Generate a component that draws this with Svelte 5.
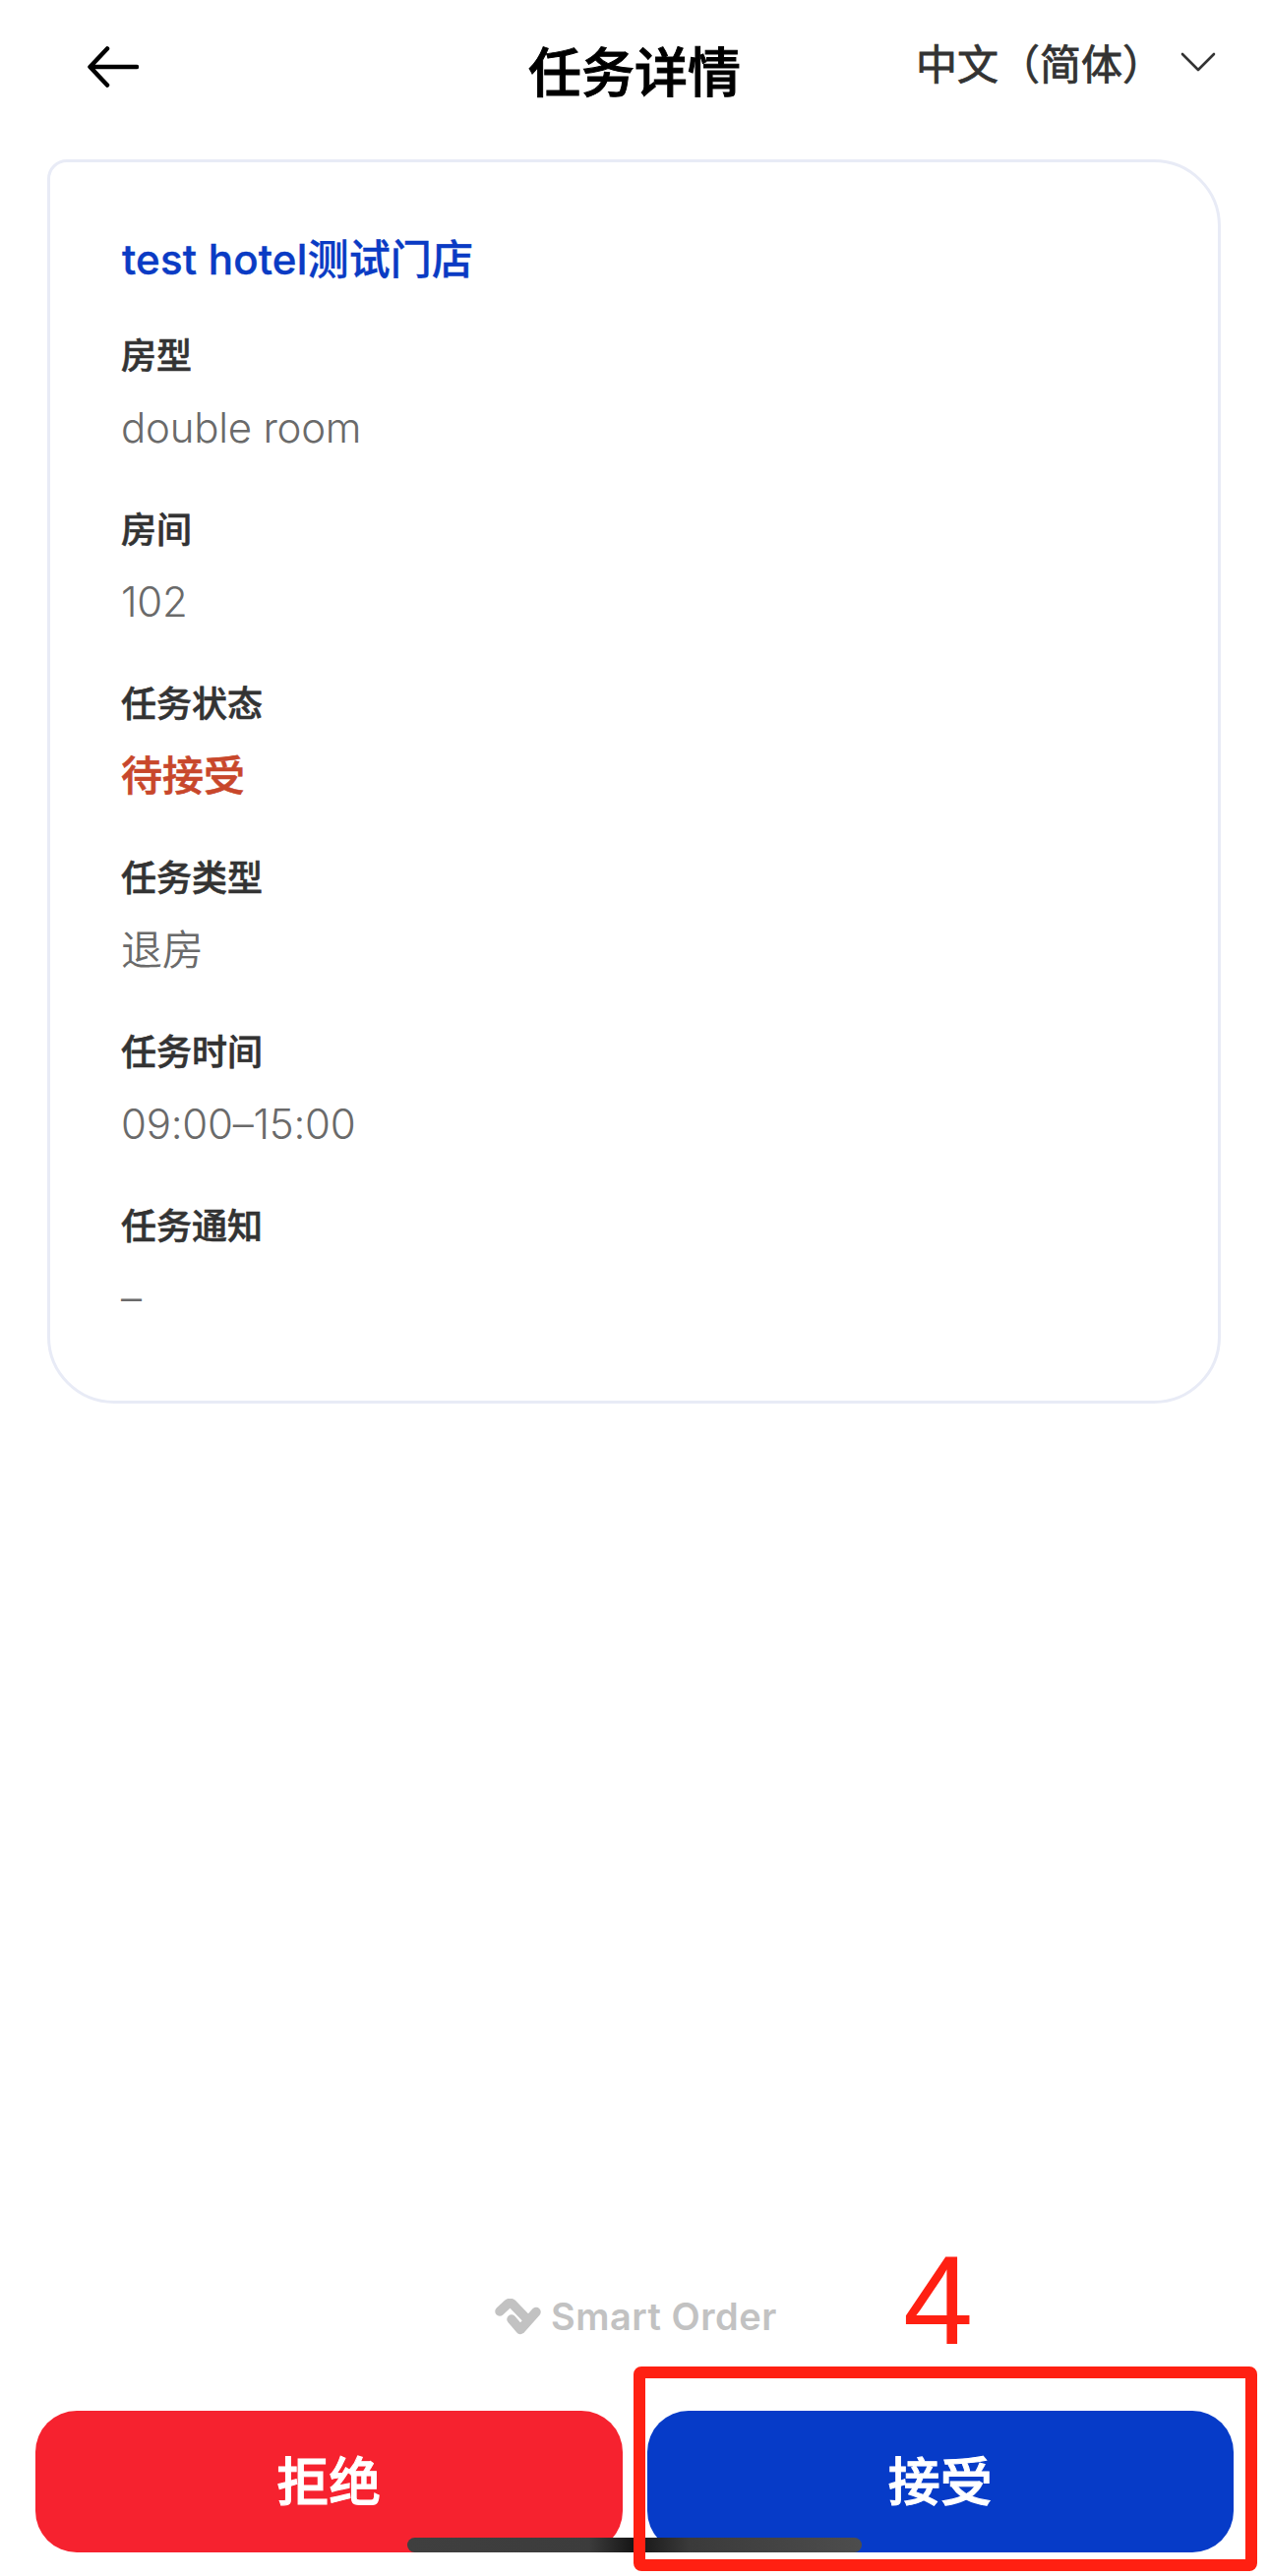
<script>
  const rows = [
    { label: '房型', value: 'double room' },
    { label: '房间', value: '102' },
    { label: '任务状态', value: '待接受', status: true },
    { label: '任务类型', value: '退房' },
    { label: '任务时间', value: '09:00–15:00' },
    { label: '任务通知', value: '–' }
  ];
</script>

<div class="page">
  <header class="top">
    <svg class="back" width="52" height="42" viewBox="0 0 52 42" fill="none" stroke="#000" stroke-width="4.5" stroke-linecap="round" stroke-linejoin="round">
      <path d="M50 21H3M20 2.500 2.500 21 20 39.500" />
    </svg>
    <h1>任务详情</h1>
    <div class="lang">
      <span>中文（简体）</span>
      <svg width="36" height="22" viewBox="0 0 36 22" fill="none" stroke="#333" stroke-width="2.6" stroke-linecap="round" stroke-linejoin="round">
        <path d="M2 3 18 19 34 3" />
      </svg>
    </div>
  </header>

  <section class="card">
    <h2>test hotel测试门店</h2>
    {#each rows as row}
      <div class="row">
        <div class="label">{row.label}</div>
        <div class="value" class:status={row.status}>{row.value}</div>
      </div>
    {/each}
  </section>

  <div class="spacer"></div>

  <div class="brand">
    <svg width="47" height="37" viewBox="0 0 47 37" fill="none" stroke="#c2c2c2" stroke-width="9.500" stroke-linecap="round" stroke-linejoin="round">
      <path d="M5 13 13 5.500Q15.500 3.500 18 5.500L31 19" />
      <path d="M17 21 26 31.500 42 13.500" />
    </svg>
    <span>Smart Order</span>
  </div>

  <div class="actions">
    <button class="reject">拒绝</button>
    <button class="accept">接受</button>
  </div>

  <div class="homebar"></div>
  <div class="highlight"></div>
  <div class="step">4</div>
</div>

<style>
  :global(body) {
    margin: 0;
    background: #fff;
  }
  .page {
    position: relative;
    width: 1290px;
    height: 2619px;
    display: flex;
    flex-direction: column;
    overflow: hidden;
    font-family: Inter, "Noto Sans CJK SC", sans-serif;
    background: #fff;
  }
  .top {
    height: 162px;
    flex: none;
    position: relative;
    box-sizing: border-box;
    padding: 47px 54px 0 89px;
    display: flex;
    justify-content: space-between;
    align-items: flex-start;
  }
  h1 {
    position: absolute;
    left: 0;
    right: 0;
    top: 36px;
    margin: 0;
    text-align: center;
    font-size: 54px;
    line-height: 70px;
    font-weight: 500;
    color: #000;
    -webkit-text-stroke: 1px #000;
    font-family: "Noto Sans CJK SC", sans-serif;
  }
  .lang {
    display: flex;
    align-items: center;
    gap: 17px;
    margin-top: -16px;
    font-size: 42px;
    line-height: 64px;
    color: #333;
    -webkit-text-stroke: 0.8px #333;
    font-family: "Noto Sans CJK SC", sans-serif;
  }
  .card {
    margin: 0 49px 0 48px;
    height: 1265px;
    box-sizing: border-box;
    border: 3px solid #e8ebf6;
    border-radius: 20px 68px 68px 68px;
    padding: 72px 72px 0;
    display: flex;
    flex-direction: column;
    gap: 45px;
  }
  h2 {
    margin: 0 0 -2px 1px;
    font-size: 42px;
    line-height: 54px;
    font-weight: 500;
    letter-spacing: 0.2px;
    color: #0a3bc4;
    -webkit-text-stroke: 0.4px #0a3bc4;
    font-family: Inter, "Noto Sans CJK SC", sans-serif;
  }
  .row {
    display: flex;
    flex-direction: column;
    gap: 20px;
  }
  .label {
    font-size: 36px;
    line-height: 50px;
    font-weight: 500;
    color: #333;
    -webkit-text-stroke: 0.6px #333;
    font-family: "Noto Sans CJK SC", sans-serif;
  }
  .value {
    font-size: 42px;
    line-height: 62px;
    letter-spacing: -0.25px;
    color: #6a6a6a;
    font-weight: 350;
    font-family: Inter, "Noto Sans CJK SC", sans-serif;
  }
  .value.status {
    color: #c8472b;
    font-weight: 500;
    letter-spacing: 0;
    -webkit-text-stroke: 0.6px #c8472b;
  }
  .spacer {
    flex: 1;
  }
  .brand {
    display: flex;
    align-items: center;
    gap: 10px;
    padding-left: 503px;
    margin-bottom: 77px;
    color: #c2c2c2;
    font-size: 38px;
    line-height: 38px;
    font-weight: 600;
    letter-spacing: 0.5px;
    font-family: Inter, sans-serif;
  }
  .actions {
    display: flex;
    gap: 25px;
    padding: 0 36px 24px 36px;
  }
  button {
    flex: 1;
    height: 144px;
    border: 0;
    padding: 0 0 6px;
    border-radius: 42px;
    color: #fff;
    font-size: 53px;
    font-weight: 500;
    -webkit-text-stroke: 1px #fff;
    font-family: "Noto Sans CJK SC", sans-serif;
  }
  .reject {
    background: #f6222f;
  }
  .accept {
    background: #063bc8;
  }
  .homebar {
    position: absolute;
    left: 414px;
    top: 2580px;
    width: 462px;
    height: 15px;
    border-radius: 8px;
    background: linear-gradient(90deg, #3f3f3f 0%, #3c3c3c 40%, #151515 50%, #3a3a3a 62%, #4d4d4d 100%);
  }
  .highlight {
    position: absolute;
    left: 644px;
    top: 2406px;
    width: 634px;
    height: 208px;
    box-sizing: border-box;
    border: 12px solid #ff2012;
    border-radius: 8px;
  }
  .step {
    position: absolute;
    left: 918px;
    top: 2269px;
    font-size: 128px;
    line-height: 140px;
    color: #ff2012;
    font-family: "Liberation Sans", sans-serif;
  }
</style>
